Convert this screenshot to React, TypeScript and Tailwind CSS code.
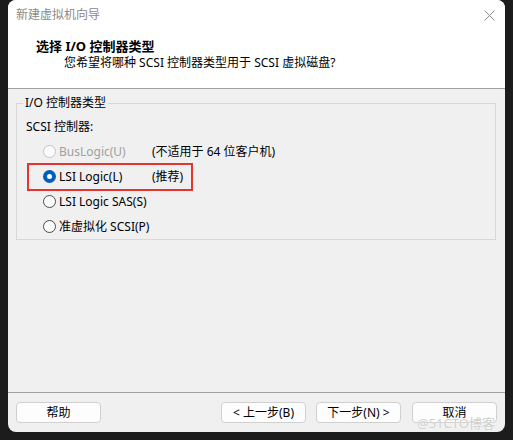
import React from "react";

const font = { fontFamily: '"Segoe UI","Noto Sans","Noto Sans CJK SC",sans-serif' };

function Radio({ checked, disabled }: { checked?: boolean; disabled?: boolean }) {
  if (checked) {
    return (
      <span className="w-[13px] h-[13px] rounded-full bg-[#005fb8] flex items-center justify-center shrink-0">
        <span className="w-[5px] h-[5px] rounded-full bg-white" />
      </span>
    );
  }
  return (
    <span
      className={
        "w-[13px] h-[13px] rounded-full bg-[#fbfbfb] border shrink-0 " +
        (disabled ? "border-[#c4c4c4]" : "border-[#4a4a4a]")
      }
    />
  );
}

function Row({
  label,
  note,
  checked,
  disabled,
  boxed,
}: {
  label: string;
  note?: string;
  checked?: boolean;
  disabled?: boolean;
  boxed?: boolean;
}) {
  return (
    <div className="relative h-[25px] flex items-center pl-[26px]">
      {boxed && (
        <div className="absolute left-[10px] top-[-1px] w-[166px] h-[28px] border-2 border-[#e53530]" />
      )}
      <Radio checked={checked} disabled={disabled} />
      <span className={"ml-[3px] w-[93px] whitespace-nowrap " + (disabled ? "text-[#a0a0a0]" : "text-black")}>
        {label}
      </span>
      {note && <span className="text-black whitespace-nowrap">{note}</span>}
    </div>
  );
}

function Btn({ children }: { children: React.ReactNode }) {
  return (
    <div className="w-[85px] h-[21px] rounded-[4px] bg-[#fdfdfd] border border-[#d0d0d0] flex items-center justify-center text-[12px] text-black">
      {children}
    </div>
  );
}

export default function App() {
  return (
    <div className="w-[513px] h-[440px] bg-[#1c1c1c] px-[8px] pb-[8px]" style={font}>
      <div className="relative w-[497px] h-[432px] rounded-[8px] overflow-hidden bg-[#f0f0f0] flex flex-col text-[12px]">
        {/* header */}
        <div className="h-[89px] bg-white border-b border-[#a0a0a0] flex flex-col shrink-0">
          <div className="h-[30px] flex items-center justify-between pl-[8px] pr-[10px]">
            <span className="text-[#8a8a8a] text-[12px]">新建虚拟机向导</span>
            <svg width="11" height="11" viewBox="0 0 11 11">
              <path d="M0.5 0.5 L10.5 10.5 M10.5 0.5 L0.5 10.5" stroke="#8a8a8a" strokeWidth="1" />
            </svg>
          </div>
          <div className="mt-[9px] pl-[28px] h-[16px] flex items-center font-bold text-[13px] text-black">
            选择 I/O 控制器类型
          </div>
          <div className="pl-[56px] h-[16px] flex items-center text-[12px] text-black">
            您希望将哪种 SCSI 控制器类型用于 SCSI 虚拟磁盘?
          </div>
        </div>

        {/* body */}
        <div className="flex-1 px-[8px] pt-[14px]">
          <div className="relative w-[480px] border border-[#d8d8d8] pt-[13px]">
            <span className="absolute left-[6px] top-[-9px] px-[2px] bg-[#f0f0f0] text-black leading-[16px]">
              I/O 控制器类型
            </span>
            <div className="h-[20px] flex items-center pl-[9px] text-black">SCSI 控制器:</div>
            <div className="mt-[2px] flex flex-col">
              <Row label="BusLogic(U)" note="(不适用于 64 位客户机)" disabled />
              <Row label="LSI Logic(L)" note="(推荐)" checked boxed />
              <Row label="LSI Logic SAS(S)" />
              <Row label="准虚拟化 SCSI(P)" />
            </div>
          </div>
        </div>

        {/* footer */}
        <div className="h-[40px] border-t border-[#a0a0a0] flex items-start justify-between pl-[8px] pr-[8px] pt-[9px] shrink-0">
          <Btn>帮助</Btn>
          <div className="flex gap-[10px]">
            <Btn>&lt; 上一步(B)</Btn>
            <Btn>下一步(N) &gt;</Btn>
            <div className="ml-[1px]">
              <Btn>取消</Btn>
            </div>
          </div>
        </div>

        <span
          className="absolute left-[409px] top-[415px] text-[13px] leading-[16px] text-[#cfcfcf] whitespace-nowrap"
          style={{ textShadow: "0 0 2px #ffffff" }}
        >
          @51CTO博客
        </span>
      </div>
    </div>
  );
}
